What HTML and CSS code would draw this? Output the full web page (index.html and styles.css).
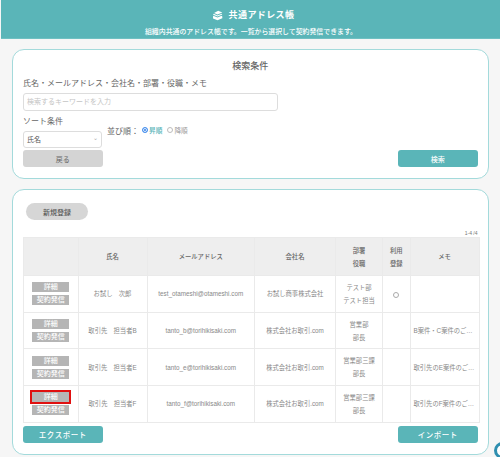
FILE: index.html
```html
<!DOCTYPE html>
<html lang="ja">
<head>
<meta charset="utf-8">
<title>共通アドレス帳</title>
<link rel="stylesheet" href="styles.css">
</head>
<body>
<header class="hero">
  <h1 class="hero-title">
    <svg class="hero-icon" viewBox="0 0 16 16" aria-hidden="true">
      <path d="M9 1 15 3.5 8 6.5 3 4.5Z" fill="#fff"/>
      <path d="M2.5 5.5 8 8 14 5.5 15 6.5 8 9.5 1.5 7Z" fill="#fff"/>
      <path d="M2 8.5 8 11 14 8.5 15 9.5V12L8 15 1.5 12.5V9.5Z" fill="#fff"/>
    </svg>
    共通アドレス帳
  </h1>
  <p class="hero-sub">組織内共通のアドレス帳です。一覧から選択して契約発信できます。</p>
</header>

<main class="page">
  <section class="card search">
    <h2 class="search-title">検索条件</h2>
    <label class="field-label">氏名・メールアドレス・会社名・部署・役職・メモ</label>
    <div class="input">検索するキーワードを入力</div>
    <div class="sort-row">
      <div class="sort-col">
        <div class="field-label sort-label">ソート条件</div>
        <div class="select"><span>氏名</span><span class="caret">⌄</span></div>
      </div>
      <div class="order">
        <span class="order-label">並び順：</span>
        <span class="radio radio-on"></span><span class="order-on">昇順</span>
        <span class="radio radio-off"></span><span class="order-off">降順</span>
      </div>
    </div>
    <div class="actions">
      <button class="btn btn-gray">戻る</button>
      <button class="btn btn-teal">検索</button>
    </div>
  </section>

  <section class="card list">
    <button class="btn-new">新規登録</button>
    <div class="count">1-4 /4</div>
    <table class="table">
      <colgroup>
        <col class="c1"><col class="c2"><col class="c3"><col class="c4"><col class="c5"><col class="c6"><col class="c7">
      </colgroup>
      <thead>
        <tr class="head-row">
          <th></th><th>氏名</th><th>メールアドレス</th><th>会社名</th><th>部署<br>役職</th><th>利用<br>登録</th><th>メモ</th>
        </tr>
      </thead>
      <tbody>
        <tr>
          <td><div class="ops"><span class="tag">詳細</span><span class="tag">契約発信</span></div></td>
          <td>お試し　次郎</td><td>test_otameshi@otameshi.com</td><td>お試し商事株式会社</td>
          <td class="two">テスト部<br>テスト担当</td><td><span class="circle"></span></td><td class="memo"></td>
        </tr>
        <tr>
          <td><div class="ops"><span class="tag">詳細</span><span class="tag">契約発信</span></div></td>
          <td>取引先　担当者B</td><td>tanto_b@torihikisaki.com</td><td>株式会社お取引.com</td>
          <td class="two">営業部<br>部長</td><td></td><td class="memo">B案件・C案件のご…</td>
        </tr>
        <tr>
          <td><div class="ops"><span class="tag">詳細</span><span class="tag">契約発信</span></div></td>
          <td>取引先　担当者E</td><td>tanto_e@torihikisaki.com</td><td>株式会社お取引.com</td>
          <td class="two">営業部三課<br>部長</td><td></td><td class="memo">取引先のE案件のご…</td>
        </tr>
        <tr>
          <td><div class="ops"><span class="tag tag-marked">詳細</span><span class="tag">契約発信</span></div></td>
          <td>取引先　担当者F</td><td>tanto_f@torihikisaki.com</td><td>株式会社お取引.com</td>
          <td class="two">営業部三課<br>部長</td><td></td><td class="memo">取引先のF案件のご…</td>
        </tr>
      </tbody>
    </table>
    <div class="actions list-actions">
      <button class="btn btn-teal btn-tall">エクスポート</button>
      <button class="btn btn-teal btn-tall">インポート</button>
    </div>
  </section>
</main>
<div class="chat"></div>
</body>
</html>
```
FILE: styles.css
```css
* { box-sizing: border-box; }
html, body { margin: 0; padding: 0; height: 457px; overflow: hidden; }
body {
  background: #f6f6f6;
  font-family: "Liberation Sans", "Noto Sans CJK JP", sans-serif;
  color: #666;
}
.hero {
  height: 39px;
  margin-left: 1px;
  background: #5ab5b8;
  border-bottom: 1px solid #6fc0c2;
  color: #fff;
  text-align: center;
  padding-top: 7px;
}
.hero-title {
  margin: 0;
  font-size: 9px;
  line-height: 16px;
  font-weight: 700;
  letter-spacing: 0.4px;
  display: flex;
  justify-content: center;
  align-items: center;
  gap: 6px;
  padding-left: 5px;
}
.hero-icon { width: 11px; height: 11px; }
.hero-sub {
  margin: 4px 0 0;
  font-size: 6.9px;
  line-height: 9px;
  font-weight: 500;
  padding-left: 1px;
}
.page { padding: 10px 11px 0 11.5px; }
.card {
  background: #fff;
  border: 1px solid #a3dadb;
  border-radius: 12px;
}
.search {
  height: 130px;
  padding: 7px 10.5px 0;
  margin-bottom: 10px;
}
.search-title {
  margin: 0;
  text-align: center;
  font-size: 9px;
  line-height: 18px;
  font-weight: 500;
  color: #666;
}
.field-label { display: block; font-size: 8px; line-height: 12px; color: #666; margin-top: 2.5px; }
.input {
  width: 254.5px;
  height: 18px;
  margin-top: 3.5px;
  border: 1px solid #ddd;
  border-radius: 3px;
  font-size: 7px;
  line-height: 16px;
  padding-left: 3px;
  color: #c4c4c4;
}
.sort-row { display: flex; gap: 5px; margin-top: 3px; }
.sort-col { width: 79px; }
.sort-label { margin-top: 2px; }
.select {
  height: 17px;
  margin-top: 3px;
  border: 1px solid #ddd;
  border-radius: 3px;
  font-size: 7px;
  line-height: 15px;
  padding: 0 3px;
  color: #555;
  display: flex;
  justify-content: space-between;
}
.caret { color: #aaa; font-size: 6px; line-height: 13px; }
.order { display: flex; align-items: center; height: 12px; margin-top: 10px; font-size: 6.7px; }
.order-label { font-size: 8px; margin-right: 3px; }
.radio {
  width: 6px; height: 6px; border-radius: 50%;
  margin-right: 1px; flex: none;
}
.radio-on { border: 1.5px solid #4c93ee; background: #2f7fe8; box-shadow: inset 0 0 0 1px #fff; }
.radio-off { border: 1px solid #bbb; background: #fff; margin-left: 5px; }
.order-on { color: #5ab5b8; font-weight: 500; }
.order-off { color: #999; }
.actions { display: flex; justify-content: space-between; margin-top: 2px; }
.btn {
  width: 79.5px;
  height: 17px;
  border: 0;
  border-radius: 3px;
  font: inherit;
  font-size: 7px;
  padding: 0;
}
.btn-gray { background: #d4d4d4; color: #666; }
.btn-teal { background: #5ab5b8; color: #fff; font-weight: 500; }
.btn-tall { font-size: 7.5px; letter-spacing: 0.5px; }
.list { height: 266px; padding: 13px 10.5px 0; }
.btn-new {
  display: block;
  width: 62px;
  height: 17px;
  margin-left: 3px;
  border: 0;
  border-radius: 9px;
  background: #d6d6d6;
  color: #555;
  font: inherit;
  font-size: 7px;
  font-weight: 500;
  padding: 0;
}
.count { text-align: right; font-size: 5px; line-height: 6px; color: #777; margin-top: 10px; margin-bottom: 1px; }
.table {
  width: 455.5px;
  table-layout: fixed;
  border-collapse: collapse;
  font-size: 6.3px;
  color: #888;
  text-align: center;
}
.c1 { width: 54.5px; } .c2 { width: 69px; } .c3 { width: 107.5px; } .c4 { width: 81px; }
.c5 { width: 47px; } .c6 { width: 27.5px; } .c7 { width: 69px; }
.table th, .table td { border: 1px solid #eaeaea; padding: 0; }
.table th { background: #eee; color: #666; font-weight: 500; height: 38px; line-height: 13px; }
.table td { height: 36.7px; line-height: 13px; }
.ops { display: flex; flex-direction: column; align-items: center; gap: 3px; }
.tag {
  width: 37px;
  height: 10px;
  background: #b5b5b5;
  color: #fff;
  font-size: 7px;
  line-height: 10px;
  font-weight: 500;
}
.tag-marked { outline: 2px solid #e01010; outline-offset: 0.5px; }
.circle {
  display: inline-block;
  width: 6px; height: 6px;
  border: 1px solid #aaa;
  border-radius: 50%;
  vertical-align: middle;
}
.memo { text-align: left; padding-left: 3px !important; white-space: nowrap; overflow: hidden; }
.list-actions { margin-top: 3px; }
.chat {
  position: absolute;
  left: 494px;
  top: 442px;
  width: 17px;
  height: 17px;
  border-radius: 50%;
  background: #fff;
  border: 3.5px solid #2f8fb0;
}
```
